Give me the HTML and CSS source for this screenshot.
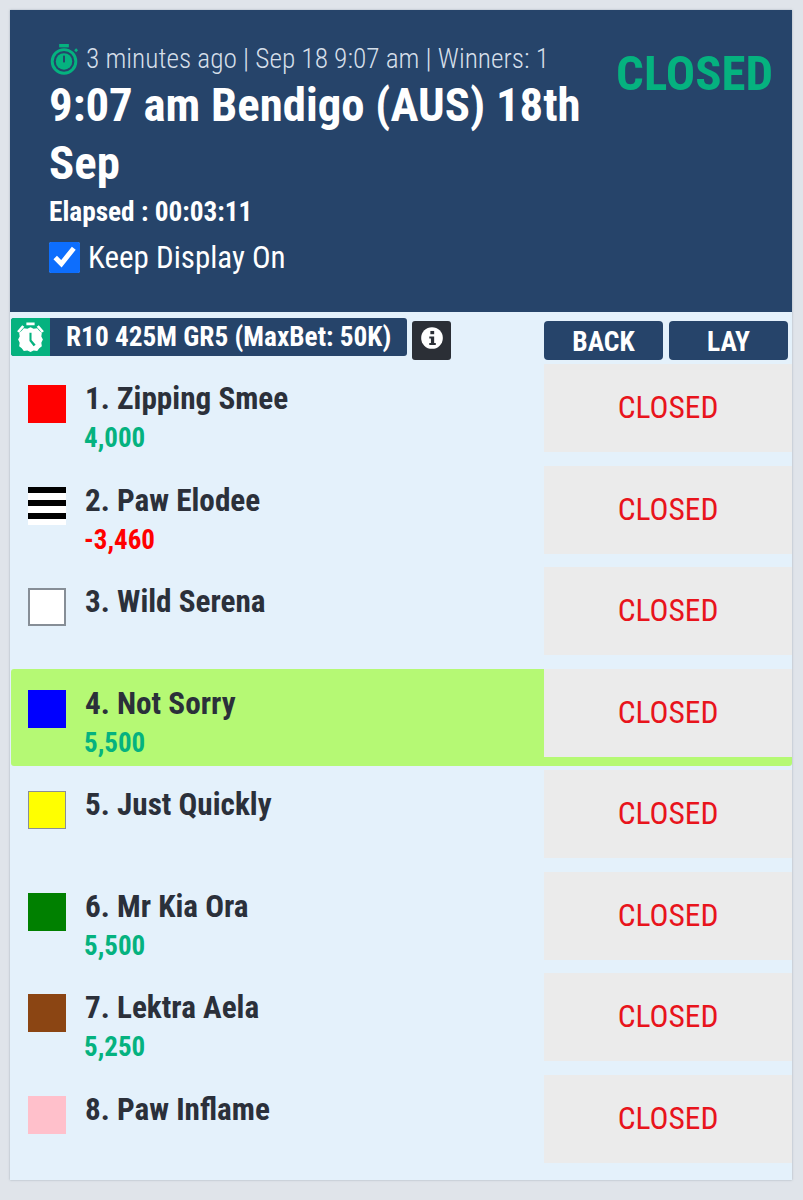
FILE: index.html
```html
<!DOCTYPE html>
<html lang="en">
  <head>
    <meta charset="UTF-8" />
    <meta name="viewport" content="width=device-width, initial-scale=1.0" />
    <title>Race card</title>
    <link rel="stylesheet" href="styles.css">
  </head>
  <body>
    <div class="card">
      <div class="header">
        <div class="header-info">
          <div class="meta">
            <svg class="meta-icon" viewBox="0 0 32 32">
              <rect x="10.500" y="0" width="10" height="3.500" fill="#05b27f"/>
              <path d="M26 6.500l2-2 2 2-2 2z" fill="#05b27f"/>
              <circle cx="15.500" cy="18" r="12.200" fill="none" stroke="#05b27f" stroke-width="3"/>
              <circle cx="15.500" cy="18" r="8.500" fill="#05b27f"/>
              <rect x="14.500" y="12" width="2" height="7" fill="#26446a"/>
            </svg>
            <span class="meta-text">3 minutes ago | Sep 18 9:07 am | Winners: 1</span>
          </div>
          <h1 class="title">9:07 am Bendigo (AUS) 18th<br>Sep</h1>
          <div class="elapsed">Elapsed : 00:03:11</div>
          <label class="keep-on">
            <input type="checkbox" checked>
            <span>Keep Display On</span>
          </label>
        </div>
        <div class="market-status">CLOSED</div>
      </div>

      <div class="race-bar">
        <div class="race-label">
          <span class="race-icon">
            <svg viewBox="0 0 32 32" width="33" height="33">
              <path d="M3 10l5-6 2 1.500-5 6zM29 10l-5-6-2 1.500 5 6zM12 1.500h8v2.500h-8z" fill="#fff"/>
              <path d="M16 6l3 1.500 3.500-.500 2 2.500 2.500 2-.500 3.500 1.500 3-1.500 3 .500 3.500-2.500 2-2 2.500-3.500-.500-3 1.500-3-1.500-3.500.500-2-2.500-2.500-2 .500-3.500-1.500-3 1.500-3-.500-3.500 2.500-2 2-2.500 3.500.500z" fill="#fff"/>
              <path d="M15 11.500h2v7l4 4.500-2 1.500-4-5z" fill="#05b27f"/>
            </svg>
          </span>
          <span class="race-name">R10 425M GR5 (MaxBet: 50K)</span>
        </div>
        <button class="info-btn">
          <svg viewBox="0 0 24 24" width="26" height="26">
            <circle cx="12" cy="12" r="10" fill="#fff"/>
            <rect x="10.500" y="5.500" width="3.500" height="3" fill="#2b2f36"/>
            <path d="M9.500 10.500h4.500v6h1.500v2h-6v-2h1.500v-4h-1.500z" fill="#2b2f36"/>
          </svg>
        </button>
        <div class="bet-heads">
          <div class="bet-head">BACK</div>
          <div class="bet-head">LAY</div>
        </div>
      </div>

      <div class="runners">
        <div class="runner">
          <div class="silk silk-red"></div>
          <div class="runner-info">
            <div class="runner-name">1. Zipping Smee</div>
            <div class="runner-pl up">4,000</div>
          </div>
          <div class="odds">CLOSED</div>
        </div>
        <div class="runner">
          <div class="silk silk-stripes"></div>
          <div class="runner-info">
            <div class="runner-name">2. Paw Elodee</div>
            <div class="runner-pl down">-3,460</div>
          </div>
          <div class="odds">CLOSED</div>
        </div>
        <div class="runner">
          <div class="silk silk-white"></div>
          <div class="runner-info">
            <div class="runner-name">3. Wild Serena</div>
          </div>
          <div class="odds">CLOSED</div>
        </div>
        <div class="runner winner">
          <div class="silk silk-blue"></div>
          <div class="runner-info">
            <div class="runner-name">4. Not Sorry</div>
            <div class="runner-pl up">5,500</div>
          </div>
          <div class="odds">CLOSED</div>
        </div>
        <div class="runner">
          <div class="silk silk-yellow"></div>
          <div class="runner-info">
            <div class="runner-name">5. Just Quickly</div>
          </div>
          <div class="odds">CLOSED</div>
        </div>
        <div class="runner">
          <div class="silk silk-green"></div>
          <div class="runner-info">
            <div class="runner-name">6. Mr Kia Ora</div>
            <div class="runner-pl up">5,500</div>
          </div>
          <div class="odds">CLOSED</div>
        </div>
        <div class="runner">
          <div class="silk silk-brown"></div>
          <div class="runner-info">
            <div class="runner-name">7. Lektra Aela</div>
            <div class="runner-pl up">5,250</div>
          </div>
          <div class="odds">CLOSED</div>
        </div>
        <div class="runner">
          <div class="silk silk-pink"></div>
          <div class="runner-info">
            <div class="runner-name">8. Paw Inflame</div>
          </div>
          <div class="odds">CLOSED</div>
        </div>
      </div>
    </div>
  </body>
</html>
```

FILE: styles.css
```css
body {
  margin: 0;
  padding: 10px 11px 20px 10px;
  font-family: "Roboto Condensed", Roboto, sans-serif;
  font-stretch: 75%;
  background: #e0e4ea;
}

.card {
  height: 1170px;
  background: #e4f1fb;
  box-shadow: 0 0 2px rgba(100, 120, 140, 0.5);
}

.header {
  display: flex;
  justify-content: space-between;
  height: 302px;
  box-sizing: border-box;
  padding: 33px 19px 0 39px;
  background: #26446a;
  color: white;
}

.meta {
  display: flex;
  align-items: center;
  gap: 6px;
  height: 32px;
  margin-bottom: 1px;
}

.meta-icon {
  width: 31px;
  height: 33px;
}

.meta-text {
  font-size: 27.350px;
  font-weight: 300;
  color: #d5dfe9;
}

.title {
  margin: 0;
  font-size: 46.800px;
  line-height: 58px;
  font-weight: 700;
}

.elapsed {
  margin-top: 4px;
  font-size: 27.300px;
  font-weight: 700;
}

.keep-on {
  display: flex;
  align-items: center;
  gap: 8px;
  margin-top: 11px;
  font-size: 31px;
}

.keep-on input {
  width: 31px;
  height: 31px;
  margin: 0;
  accent-color: #0d6efd;
}

.market-status {
  margin-top: 2px;
  font-size: 48.800px;
  font-weight: 700;
  color: #05b27f;
}

.race-bar {
  display: flex;
  align-items: flex-start;
  height: 46px;
  padding: 6px 4px 0 1px;
}

.race-label {
  display: flex;
  width: 396px;
  height: 38px;
  border-radius: 3px;
  overflow: hidden;
  background: #26446a;
  color: white;
}

.race-icon {
  display: flex;
  align-items: center;
  justify-content: center;
  width: 39px;
  background: #05b27f;
}

.race-name {
  padding-left: 16px;
  font-size: 27.300px;
  line-height: 38px;
  font-weight: 700;
}

.info-btn {
  display: flex;
  align-items: center;
  justify-content: center;
  width: 39px;
  height: 39px;
  margin: 3px 0 0 5px;
  padding: 0 0 6px;
  border: none;
  border-radius: 3px;
  background: #2b2f36;
}

.bet-heads {
  display: flex;
  gap: 6px;
  margin: 3px 0 0 auto;
}

.bet-head {
  width: 119px;
  height: 39px;
  border-radius: 4px;
  background: #26446a;
  color: white;
  font-size: 27.500px;
  line-height: 41px;
  font-weight: 700;
  text-align: center;
}

.runner {
  display: flex;
  height: 97.500px;
  margin-bottom: 4px;
  border-radius: 3px;
}

.winner {
  margin-left: 1px;
  background: #b5f974;
}

.silk {
  flex: none;
  box-sizing: border-box;
  width: 38px;
  height: 38px;
  margin: 21px 0 0 18px;
}

.winner .silk {
  margin-left: 17px;
}

.silk-red { background: #ff0000; }
.silk-blue { background: #0000ff; }
.silk-yellow { background: #ffff00; border: 1px solid #8a8f94; }
.silk-green { background: #008000; }
.silk-brown { background: #8b4513; }
.silk-pink { background: #ffc0cb; }
.silk-white { background: white; border: 2px solid #868e96; }
.silk-stripes {
  background: repeating-linear-gradient(#000 0, #000 6px, #fff 6px, #fff 13px);
}

.runner-info {
  flex: 1;
  padding: 16px 0 0 19px;
}

.runner-name {
  font-size: 31.200px;
  line-height: 38px;
  font-weight: 700;
  color: #2b303a;
}

.runner-pl {
  margin: 2px 0 0 -1px;
  font-size: 27px;
  line-height: 36px;
  font-weight: 700;
}

.up { color: #05b27f; }
.down { color: #ff0000; }

.odds {
  flex: none;
  width: 248px;
  height: 88px;
  background: #ebebeb;
  color: #e8141c;
  font-size: 31.500px;
  line-height: 88px;
  text-align: center;
}
```
